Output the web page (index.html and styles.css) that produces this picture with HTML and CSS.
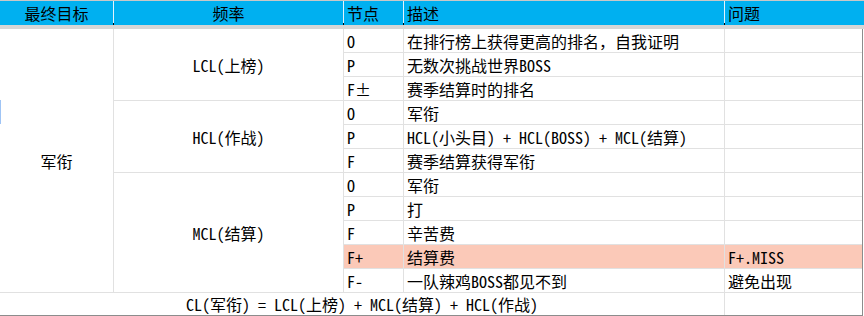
FILE: index.html
```html
<!DOCTYPE html>
<html lang="zh-CN">
<head>
<meta charset="utf-8">
<title>目标频率表</title>
<link rel="stylesheet" href="styles.css">
</head>
<body>
<div class="sheet">
  <div class="head">
    <div class="hc c">最终目标</div>
    <div class="hc c">频率</div>
    <div class="hc l">节点</div>
    <div class="hc l">描述</div>
    <div class="hc l">问题</div>
  </div>
  <div class="band"></div>
  <div class="grid">
    <div class="cell c r11">军衔</div>
    <div class="cell c r3">LCL(上榜)</div>
    <div class="cell l">O</div>
    <div class="cell l">在排行榜上获得更高的排名，自我证明</div>
    <div class="cell l"></div>
    <div class="cell l">P</div>
    <div class="cell l">无数次挑战世界BOSS</div>
    <div class="cell l"></div>
    <div class="cell l">F±</div>
    <div class="cell l">赛季结算时的排名</div>
    <div class="cell l"></div>

    <div class="cell c r3">HCL(作战)</div>
    <div class="cell l">O</div>
    <div class="cell l">军衔</div>
    <div class="cell l"></div>
    <div class="cell l">P</div>
    <div class="cell l">HCL(小头目) + HCL(BOSS) + MCL(结算)</div>
    <div class="cell l"></div>
    <div class="cell l">F</div>
    <div class="cell l">赛季结算获得军衔</div>
    <div class="cell l"></div>

    <div class="cell c r5">MCL(结算)</div>
    <div class="cell l">O</div>
    <div class="cell l">军衔</div>
    <div class="cell l"></div>
    <div class="cell l">P</div>
    <div class="cell l">打</div>
    <div class="cell l"></div>
    <div class="cell l">F</div>
    <div class="cell l">辛苦费</div>
    <div class="cell l"></div>
    <div class="cell l hl">F+</div>
    <div class="cell l hl">结算费</div>
    <div class="cell l hl">F+.MISS</div>
    <div class="cell l">F-</div>
    <div class="cell l">一队辣鸡BOSS都见不到</div>
    <div class="cell l">避免出现</div>

    <div class="cell c s4">CL(军衔) = LCL(上榜) + MCL(结算) + HCL(作战)</div>
    <div class="cell l"></div>
  </div>
  <div class="mark"></div>
</div>
</body>
</html>
```
FILE: styles.css
```css
html, body {
  margin: 0;
  padding: 0;
  background: #ffffff;
}

body {
  font-family: "Noto Sans Mono CJK SC", "Noto Sans CJK SC", "Liberation Mono", monospace;
  font-size: 16px;
  color: #000000;
}

.sheet {
  position: relative;
  width: 864px;
  height: 316px;
  overflow: hidden;
}

.head {
  display: grid;
  grid-template-columns: 113px 229px 59px 320px 1fr;
  column-gap: 1px;
  height: 22px;
  background: #e4f3fc;
  border-top: 1px solid #c8c8c8;
  border-bottom: 2px solid #000000;
}

.hc {
  background: #00b0f0;
  display: flex;
  align-items: center;
  white-space: nowrap;
}

.band {
  height: 4px;
  background: #d6d6d6;
}

.grid {
  display: grid;
  width: 862px;
  grid-template-columns: 113px 229px 59px 320px 137px;
  grid-template-rows: repeat(11, 23px) 22px;
  gap: 1px;
  background: #e1e1e1;
  border-right: 1px solid #8c8c8c;
  border-bottom: 1px solid #8c8c8c;
}

.cell {
  background: #ffffff;
  display: flex;
  align-items: center;
  white-space: nowrap;
  overflow: hidden;
}

.c {
  justify-content: center;
}

.l {
  justify-content: flex-start;
  padding-left: 3px;
}

.hl {
  background: #fbc9b8;
}

.r3 { grid-row: span 3; }
.r5 { grid-row: span 5; }
.r11 { grid-row: span 11; }
.s4 { grid-column: span 4; }

.mark {
  position: absolute;
  left: 0;
  top: 100px;
  width: 1px;
  height: 24px;
  background: #9fc4f5;
}
```
